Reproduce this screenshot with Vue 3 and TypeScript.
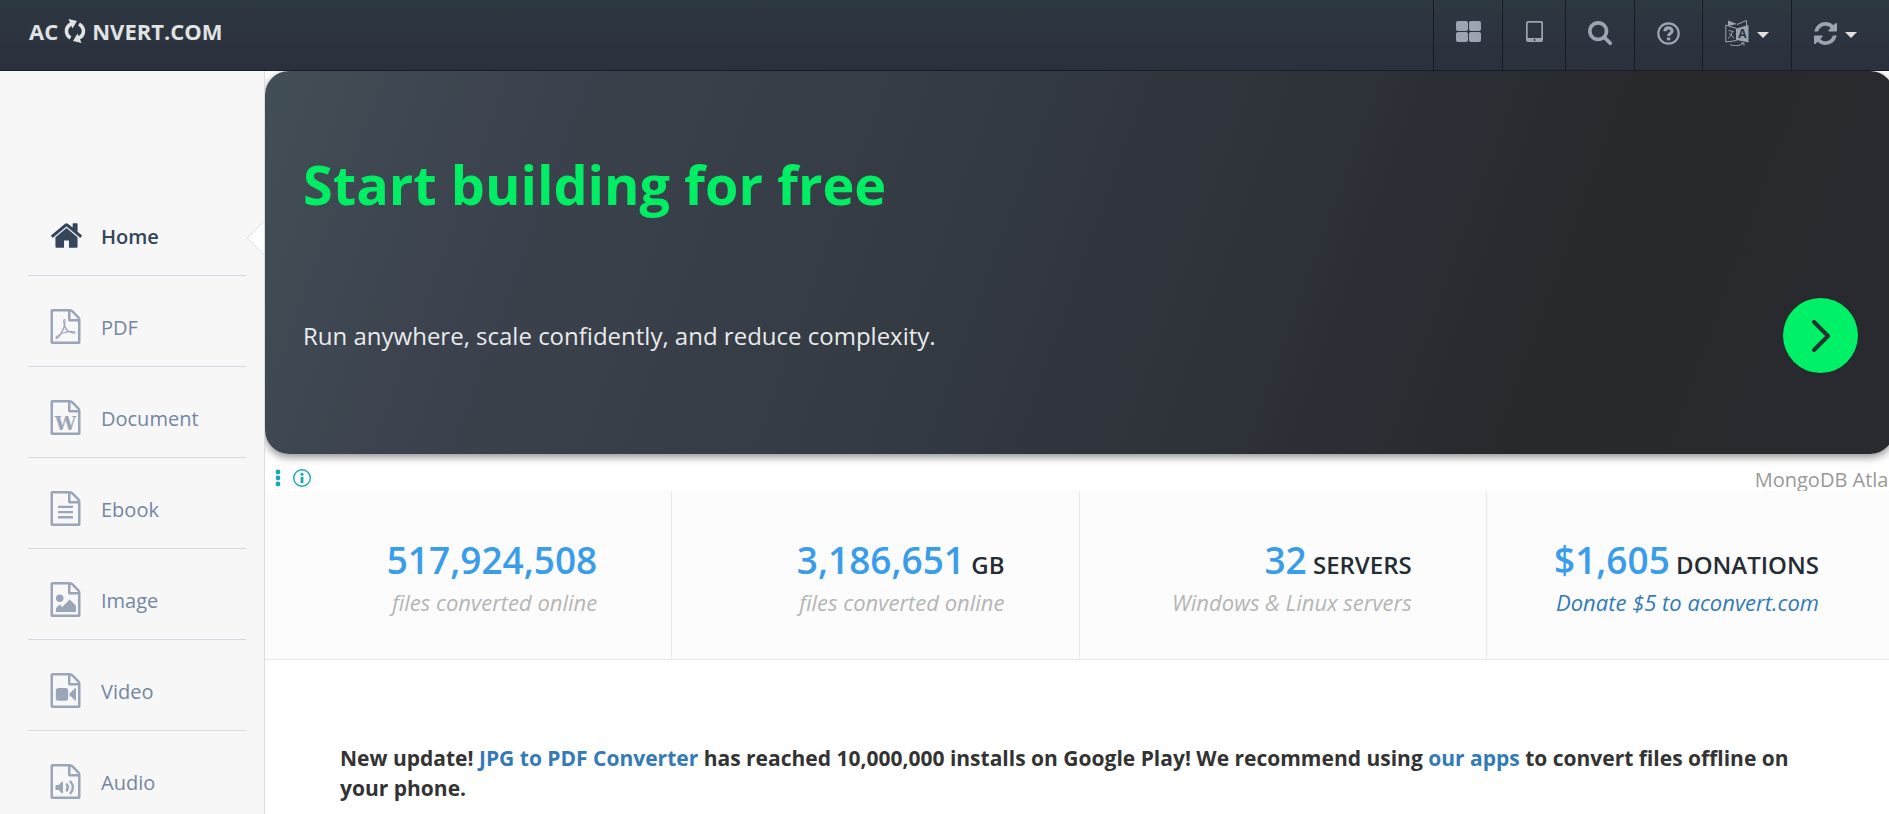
<script setup lang="ts">
interface NavItem {
  label: string
  kind: 'home' | 'pdf' | 'word' | 'text' | 'image' | 'video' | 'audio'
}
interface Stat {
  value: string
  unit?: string
  note: string
  link?: boolean
}

const navItems: NavItem[] = [
  { label: 'Home', kind: 'home' },
  { label: 'PDF', kind: 'pdf' },
  { label: 'Document', kind: 'word' },
  { label: 'Ebook', kind: 'text' },
  { label: 'Image', kind: 'image' },
  { label: 'Video', kind: 'video' },
  { label: 'Audio', kind: 'audio' },
]

const stats: Stat[] = [
  { value: '517,924,508', note: 'files converted online' },
  { value: '3,186,651', unit: 'GB', note: 'files converted online' },
  { value: '32', unit: 'SERVERS', note: 'Windows & Linux servers' },
  { value: '$1,605', unit: 'DONATIONS', note: 'Donate $5 to aconvert.com', link: true },
]

const filePath =
  'M1596 380q28 28 48 76t20 88v1152q0 40-28 68t-68 28h-1344q-40 0-68-28t-28-68v-1600q0-40 28-68t68-28h896q40 0 88 20t76 48zm-444-244v376h376q-10-29-22-41l-313-313q-12-12-41-22zm384 1528v-1024h-416q-40 0-68-28t-28-68v-416h-768v1536h1280z'
const pdfPath =
  'M1022 1071q33 26 84 56 59-7 117-7 147 0 177 49 16 22 2 52 0 1-1 2l-2 2v1q-6 38-71 38-48 0-115-20t-130-53q-221 24-392 83-153 262-242 262-15 0-28-7l-24-12q-1-1-6-5-10-10-6-36 9-40 56-91.5t132-96.5q14-9 23 6 2 2 2 4 52-85 107-197 68-136 104-262-24-82-30.5-159.5t6.5-127.5q11-40 42-40h22q23 0 35 15 18 21 9 68-2 6-4 8 1 3 1 8v30q-2 123-14 192 55 164 146 238zm-576 411q52-24 137-158-51 40-87.5 84t-49.5 74zm398-920q-15 42-2 132 1-7 7-44 0-3 7-43 1-4 4-8-1-1-1-2t-1-2q-1-22-13-36 0 1-1 2v2zm-124 661q135-54 284-81-2-1-13-9.5t-16-13.5q-76-67-127-176-27 86-83 197-30 56-45 83zm646-16q-24-24-140-24 76 28 124 28 14 0 18-1 0-1-2-3z'
</script>

<template>
  <div class="page">
    <header class="topbar">
      <a class="logo" href="#" aria-label="Aconvert.com">
        <span>AC</span>
        <svg class="logo-icon" viewBox="0 0 22 26" width="22" height="26">
          <g fill="none" stroke="currentColor" stroke-width="3.600">
            <path d="M6.500 20C1 16.500 1 8.500 7.500 6" />
            <path d="M15 6C21 9.500 21 17.500 14.500 20" />
          </g>
          <path d="M4.500 1l8.500 2-4.500 7.500z" fill="currentColor" />
          <path d="M17.500 25l-8.500-2 4.500-7.500z" fill="currentColor" />
        </svg>
        <span>NVERT.COM</span>
      </a>
      <nav class="tools" aria-label="Tools">
        <a class="tool" href="#" aria-label="All tools">
          <svg viewBox="0 0 25 21" width="25" height="21" fill="currentColor">
            <rect width="12" height="10" rx="2" /><rect x="13" width="12" height="10" rx="2" />
            <rect y="11" width="12" height="10" rx="2" /><rect x="13" y="11" width="12" height="10" rx="2" />
          </svg>
        </a>
        <a class="tool tool-narrow" href="#" aria-label="Mobile apps">
          <svg viewBox="0 0 17 21" width="17" height="21" fill="currentColor">
            <path fill-rule="evenodd" d="M2 0h13a2 2 0 0 1 2 2v17a2 2 0 0 1-2 2H2a2 2 0 0 1-2-2V2a2 2 0 0 1 2-2zM2.200 1.800a.5.5 0 0 0-.5.5v14.700h13.600V2.300a.5.5 0 0 0-.5-.5zM8.500 18a1 1 0 1 0 0 2 1 1 0 0 0 0-2z" />
          </svg>
        </a>
        <button class="tool" type="button" aria-label="Search">
          <svg class="low" viewBox="64 128 1664 1664" width="24" height="24" fill="currentColor">
            <path d="M1216 832q0-185-131.500-316.500t-316.500-131.500-316.500 131.500-131.500 316.500 131.500 316.500 316.500 131.500 316.500-131.500 131.500-316.500zm512 832q0 52-38 90t-90 38q-54 0-90-38l-343-342q-179 124-399 124-143 0-273.500-55.500t-225-150-150-225-55.500-273.500 55.500-273.500 150-225 225-150 273.500-55.500 273.500 55.500 225 150 150 225 55.500 273.500q0 220-124 399l343 343q37 37 37 90z" />
          </svg>
        </button>
        <a class="tool tool-help" href="#" aria-label="Help">
          <svg class="low" viewBox="0 0 23 23" width="23" height="23" fill="none" stroke="currentColor">
            <circle cx="11.500" cy="11.500" r="10.200" stroke-width="2.200" />
            <path d="M8 9.300C8.200 4.800 15 5 15 9c0 2.600-3.400 2.500-3.400 5" stroke-width="3.200" />
            <path d="M11.600 15.500v2.800" stroke-width="3.400" />
          </svg>
        </a>
        <button class="tool tool-menu" type="button" aria-label="Language">
          <svg class="low" viewBox="0 0 24 26" width="24" height="26">
            <g fill="none" stroke="currentColor" stroke-width="1">
              <path d="M.8 5l10.700 3.500v12L.8 22zM12 4.500L21.500.5v6" />
              <path d="M5 24.500c4 2 10 1.500 13.500-1.500M16 23h3v2.500" />
              <path d="M3.500 10.500l5 1M7.500 11.300c-1 4-2.500 6-4.500 7M4 13.500c2 1 3.500 2.500 5 5" />
            </g>
            <path fill="currentColor" d="M3 .5l9 3.500-9 2zM11.500 8.500L23.500 5v17.500l-12-2.500z" />
            <text x="17.500" y="18" class="glyph-a">A</text>
          </svg>
          <span class="caret"></span>
        </button>
        <button class="tool tool-last" type="button" aria-label="Recent conversions">
          <svg class="low" viewBox="128 128 1536 1536" width="23" height="23" fill="currentColor">
            <path d="M1639 1056q0 5-1 7-64 268-268 434.500t-478 166.500q-146 0-282.500-55t-243.500-157l-129 129q-19 19-45 19t-45-19-19-45v-448q0-26 19-45t45-19h448q26 0 45 19t19 45-19 45l-137 137q71 66 161 102t187 36q134 0 250-65t186-179q11-17 53-117 8-23 30-23h192q13 0 22.500 9.500t9.500 22.500zm25-800v448q0 26-19 45t-45 19h-448q-26 0-45-19t-19-45 19-45l138-138q-148-137-349-137-134 0-250 65t-186 179q-11 17-53 117-8 23-30 23h-199q-13 0-22.500-9.500t-9.500-22.500v-7q65-268 270-434.500t480-166.500q146 0 284 55.500t245 156.500l130-129q19-19 45-19t45 19 19 45z" />
          </svg>
          <span class="caret"></span>
        </button>
      </nav>
    </header>

    <div class="body">
      <aside class="sidebar">
        <nav aria-label="Converters">
          <ul>
            <li v-for="item in navItems" :key="item.label" :class="{ active: item.kind === 'home' }">
              <a href="#">
                <svg v-if="item.kind === 'home'" class="home-icon" viewBox="89 256 1614 1280" width="31" height="25" fill="currentColor">
                  <path d="M1472 992v480q0 26-19 45t-45 19h-384v-384h-256v384h-384q-26 0-45-19t-19-45v-480q0-1 .5-3t.5-3l575-474 575 474q1 2 1 6zm223-69l-62 74q-8 9-21 11h-3q-13 0-21-7l-692-577-692 577q-12 8-24 7-13-2-21-11l-62-74q-8-10-7-23.500t11-21.500l719-599q32-26 76-26t76 26l244 204v-195q0-14 9-23t23-9h192q14 0 23 9t9 23v408l219 182q10 8 11 21.500t-7 23.500z" />
                </svg>
                <svg v-else class="file-icon" viewBox="128 0 1536 1792" width="31" height="35" fill="currentColor">
                  <path :d="filePath" />
                  <path v-if="item.kind === 'pdf'" :d="pdfPath" />
                  <text v-else-if="item.kind === 'word'" x="896" y="1530" class="glyph-w">W</text>
                  <path v-else-if="item.kind === 'text'" d="M540 752h712q30 0 30 30v64q0 30-30 30h-712q-30 0-30-30v-64q0-30 30-30zM540 1018h712q30 0 30 30v64q0 30-30 30h-712q-30 0-30-30v-64q0-30 30-30zM540 1284h712q30 0 30 30v64q0 30-30 30h-712q-30 0-30-30v-64q0-30 30-30z" />
                  <g v-else-if="item.kind === 'image'">
                    <circle cx="600" cy="836" r="192" />
                    <path d="M1430 1216v320h-1024v-192l192-192 128 128 384-384z" />
                  </g>
                  <g v-else-if="item.kind === 'video'">
                    <rect x="400" y="768" width="632" height="648" rx="128" />
                    <path d="M1390 770q40-15 40 38v568q0 53-40 38l-298-290v-64z" />
                  </g>
                  <g v-else>
                    <path d="M748 900q20 8 20 30v544q0 22-20 30-22 8-36-8l-166-166h-131q-15 0-23-9t-9-23v-192q0-14 9-23t23-9h131l166-166q16-16 36-8z" />
                    <g fill="none" stroke="currentColor" stroke-width="120" stroke-linecap="round">
                      <path d="M960 1040q120 160 0 320" /><path d="M1150 900q250 300 0 600" />
                    </g>
                  </g>
                </svg>
                <span>{{ item.label }}</span>
              </a>
              <svg v-if="item.kind === 'home'" class="pointer" viewBox="0 0 18 34" width="18" height="34">
                <path d="M18 0L1 17l17 17" fill="#fff" stroke="#dadde1" />
              </svg>
            </li>
          </ul>
        </nav>
      </aside>

      <main class="main">
        <section class="ad">
          <div class="banner">
            <h2>Start building for free</h2>
            <div class="banner-row">
              <p>Run anywhere, scale confidently, and reduce complexity.</p>
              <a class="go" href="#" aria-label="Open">
                <svg viewBox="0 0 18 32" width="18" height="32">
                  <path d="M2 2l14 14L2 30" fill="none" stroke="currentColor" stroke-width="4" stroke-linecap="round" stroke-linejoin="round" />
                </svg>
              </a>
            </div>
          </div>
          <div class="ad-foot">
            <button type="button" aria-label="Ad options">
              <svg viewBox="0 0 6 20" width="6" height="20" fill="currentColor">
                <circle cx="3" cy="4" r="2.400" /><circle cx="3" cy="10" r="2.400" /><circle cx="3" cy="16" r="2.400" />
              </svg>
            </button>
            <button type="button" aria-label="Ad info">
              <svg viewBox="0 0 20 20" width="20" height="20">
                <circle cx="10" cy="10" r="8.300" fill="none" stroke="currentColor" stroke-width="1.400" />
                <circle cx="10" cy="6.300" r="1.500" fill="currentColor" />
                <path d="M8.600 8.800h2.800v6.200H8.600z" fill="currentColor" />
              </svg>
            </button>
            <a class="sponsor" href="#">MongoDB Atlas</a>
          </div>
        </section>

        <section class="stats">
          <div v-for="stat in stats" :key="stat.value" class="stat">
            <p class="figure"><strong>{{ stat.value }}</strong><span v-if="stat.unit">&nbsp;{{ stat.unit }}</span></p>
            <p class="note"><a v-if="stat.link" href="#">{{ stat.note }}</a><template v-else>{{ stat.note }}</template></p>
          </div>
        </section>

        <p class="update">
          New update! <a href="#">JPG to PDF Converter</a> has reached 10,000,000 installs on Google Play!
          We recommend using <a href="#">our apps</a> to convert files offline on your phone.
        </p>
      </main>
    </div>
  </div>
</template>

<style>
body {
  margin: 0;
  overflow: hidden;
}
</style>

<style scoped>
.page {
  display: flex;
  flex-direction: column;
  height: 100vh;
  overflow: hidden;
  background: #fff;
  color: #333;
  font-family: "Open Sans", "Noto Sans", sans-serif;
  font-size: 20px;
  line-height: 30px;
}
.page * {
  box-sizing: border-box;
}
a {
  color: #337ab7;
  text-decoration: none;
}
svg {
  display: block;
  flex: none;
}
button {
  padding: 0;
  border: 0;
  background: none;
  cursor: pointer;
}
p,
h2,
ul {
  margin: 0;
  padding: 0;
}

.topbar {
  display: flex;
  flex: none;
  justify-content: space-between;
  height: 71px;
  border-bottom: 1px solid #181c24;
  background: linear-gradient(#2e3841, #2a303c);
}
.logo {
  display: flex;
  align-items: center;
  height: 62px;
  padding-left: 29px;
  color: #e0e2e4;
  font-size: 22px;
  font-weight: 700;
}
.logo-icon {
  margin: 0 6px;
}
.tools {
  display: flex;
}
.tool {
  display: flex;
  align-items: center;
  justify-content: center;
  width: 69px;
  padding-bottom: 7px;
  border-left: 1px solid #171b22;
  color: #9ca4b2;
}
.tool-narrow {
  width: 63px;
}
.tool-help {
  width: 68px;
}
.tool-menu {
  width: 89px;
}
.tool-last {
  width: 98px;
  padding-right: 11px;
}
.low {
  margin-top: 3px;
}
.caret {
  width: 12px;
  margin: 6px 0 0 8px;
  border: 6px solid transparent;
  border-top-color: #e0e0e0;
  border-bottom: 0;
}
.glyph-a {
  fill: #2c343f;
  font: 700 12px "Open Sans", sans-serif;
  text-anchor: middle;
}
.glyph-w {
  fill: currentColor;
  font: 700 980px "DejaVu Serif", serif;
  text-anchor: middle;
}

.body {
  display: flex;
  flex: 1;
  min-height: 0;
}
.sidebar {
  flex: none;
  width: 265px;
  padding-top: 114px;
  border-right: 1px solid #d9dde2;
  background: #f7f7f7;
}
.sidebar ul {
  list-style: none;
}
.sidebar li {
  position: relative;
  margin: 0 18px 0 28px;
  border-bottom: 1px solid #d5dae2;
}
.sidebar li a {
  display: flex;
  align-items: center;
  gap: 20px;
  height: 90px;
  padding: 13px 0 0 22px;
  color: #7486a2;
}
.file-icon {
  margin-bottom: 2px;
  color: #9aa6b8;
}
.sidebar li.active a {
  gap: 19px;
  padding-left: 23px;
  color: #34455c;
  font-weight: 600;
}
.home-icon {
  margin-bottom: 2px;
}
.pointer {
  position: absolute;
  top: 36px;
  right: -18px;
}

.main {
  flex: 1;
  min-width: 0;
  overflow: hidden;
}
.ad {
  height: 420px;
  margin-right: -5px;
  overflow: hidden;
}
.banner {
  height: 383px;
  padding: 71px 36px 0 38px;
  border-radius: 24px;
  background: linear-gradient(110deg, #424e56 0%, #3c434e 14%, #353b43 40%, #2d3138 62%, #27292d 78%, #282a2f 100%);
  box-shadow: 0 3px 8px rgba(0, 0, 0, 0.45);
}
.banner h2 {
  color: #00ed64;
  font-size: 54px;
  font-weight: 700;
  line-height: 84px;
}
.banner-row {
  display: flex;
  align-items: center;
  justify-content: space-between;
  height: 75px;
  margin-top: 72px;
  color: #e8eaec;
  font-size: 24px;
}
.go {
  display: flex;
  align-items: center;
  justify-content: center;
  width: 75px;
  height: 75px;
  border-radius: 50%;
  background: #00f068;
  color: #24332e;
}
.ad-foot {
  display: flex;
  align-items: center;
  gap: 11px;
  height: 37px;
  padding: 10px 0 0 10px;
  color: #14a9b8;
}
.ad-foot button {
  color: inherit;
}
.sponsor {
  margin: 4px -4px 0 auto;
  color: #999;
}

.stats {
  display: grid;
  grid-template-columns: repeat(4, 1fr);
  height: 169px;
  margin-right: -5px;
  border-bottom: 1px solid #e7e8ea;
  background: #fcfcfc;
}
.stat {
  padding: 44px 74px 0 0;
  border-right: 1px solid #e9e9eb;
  text-align: right;
  white-space: nowrap;
}
.figure {
  color: #262c34;
  font-size: 24px;
  font-weight: 600;
  line-height: 50px;
}
.figure strong {
  color: #3a9dea;
  font-size: 37px;
  font-weight: 600;
}
.note {
  color: #b5b5b5;
  font-size: 22px;
  font-style: italic;
  line-height: 24px;
}

.update {
  padding: 83px 75px 0;
  font-size: 21px;
  font-weight: 700;
}
</style>
